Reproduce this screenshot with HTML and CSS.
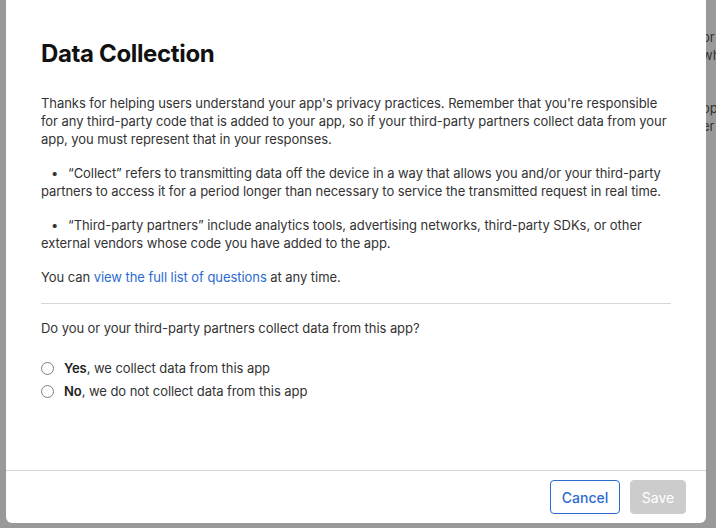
FILE: index.html
```html
<!DOCTYPE html>
<html>
<head>
<meta charset="utf-8">
<link rel="stylesheet" href="styles.css">
</head>
<body>
<div class="page">
  <div class="behind">
    <p class="b1">or</p>
    <p class="b2">wh</p>
    <p class="b3">op</p>
    <p class="b4">er</p>
  </div>
  <div class="modal">
    <div class="content">
      <h1 class="title">Data Collection</h1>
      <p class="para">Thanks for helping users understand your app's privacy practices. Remember that you're responsible for any third-party code that is added to your app, so if your third-party partners collect data from your app, you must represent that in your responses.</p>
      <ul class="bullets">
        <li>“Collect” refers to transmitting data off the device in a way that allows you and/or your third-party partners to access it for a period longer than necessary to service the transmitted request in real time.</li>
        <li>“Third-party partners” include analytics tools, advertising networks, third-party SDKs, or other external vendors whose code you have added to the app.</li>
      </ul>
      <p class="para">You can <a class="link" href="#">view the full list of questions</a> at any time.</p>
      <hr class="divider">
      <p class="question">Do you or your third-party partners collect data from this app?</p>
      <div class="options">
        <label class="option"><span class="radio"></span><span><b>Yes</b>, we collect data from this app</span></label>
        <label class="option"><span class="radio"></span><span><b>No</b>, we do not collect data from this app</span></label>
      </div>
    </div>
    <div class="footer">
      <button class="btn cancel">Cancel</button>
      <button class="btn save">Save</button>
    </div>
  </div>
</div>
</body>
</html>
```
FILE: styles.css
```css
* { box-sizing: border-box; }
html, body { margin: 0; padding: 0; }
body {
  background: #999999;
  font-family: Inter, "Noto Sans", sans-serif;
  width: 716px;
  height: 528px;
  overflow: hidden;
}
.page {
  position: relative;
  width: 716px;
  height: 528px;
}
.behind {
  position: absolute;
  left: 702px;
  top: 0;
  font-size: 13px;
  color: #333;
  line-height: 18px;
}
.behind p { margin: 0; position: absolute; left: 0; }
.b1 { top: 28px; }
.b2 { top: 46px; }
.b3 { top: 99px; }
.b4 { top: 117px; }
.modal {
  position: absolute;
  left: 6px;
  top: 0;
  width: 700px;
  height: 523px;
  background: #fff;
  border-radius: 0 0 6px 6px;
  display: flex;
  flex-direction: column;
}
.content {
  flex: 1;
  padding: 39px 35px 0 35px;
}
.title {
  margin: 0;
  font-size: 24px;
  line-height: 30px;
  font-weight: 700;
  color: #111;
  letter-spacing: -0.35px;
}
.para, .bullets, .question, .option {
  font-size: 13px;
  line-height: 18px;
  color: #333;
  letter-spacing: -0.06px;
}
.para { margin: 25px 0 0; }
.bullets {
  margin: 16px 0 0;
  padding: 0;
  list-style: none;
}
.bullets li {
  margin-bottom: 16px;
}
.bullets li::before {
  content: "•";
  display: inline-block;
  margin-left: 10px;
  width: 17px;
}
.bullets li:last-child { margin-bottom: 0; }
.bullets + .para { margin-top: 16px; }
.link { color: #2c6bd0; text-decoration: none; }
.divider {
  border: 0;
  border-top: 1px solid #d6d6d6;
  margin: 17px 0 0;
}
.question { margin: 15px 0 0; }
.options {
  margin-top: 22px;
  display: flex;
  flex-direction: column;
  gap: 5px;
}
.option {
  display: flex;
  align-items: center;
  gap: 10px;
  height: 18px;
}
.option b { font-weight: 600; color: #222; }
.radio {
  width: 13px;
  height: 13px;
  border: 1px solid #808080;
  border-radius: 50%;
  background: #fff;
  flex: none;
}
.footer {
  border-top: 1px solid #d6d6d6;
  height: 53px;
  display: flex;
  justify-content: flex-end;
  align-items: center;
  gap: 10px;
  padding: 0 20px 0 0;
}
.btn {
  height: 34px;
  border-radius: 4px;
  font-family: Inter, "Noto Sans", sans-serif;
  font-size: 14px;
  font-weight: 500;
  padding: 0;
}
.cancel {
  width: 70px;
  background: #fff;
  border: 1px solid #2c6bd0;
  color: #2c6bd0;
}
.save {
  width: 56px;
  background: #cccccc;
  border: 1px solid #cccccc;
  color: #fff;
  font-weight: 400;
}
```
